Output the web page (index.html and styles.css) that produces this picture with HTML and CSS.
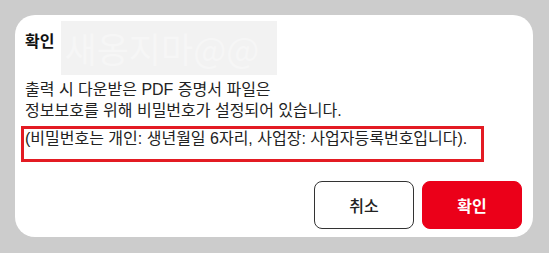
FILE: index.html
```html
<!DOCTYPE html>
<html lang="ko">
<head>
<meta charset="utf-8">
<title>확인</title>
<link rel="stylesheet" href="styles.css">
</head>
<body>
<div class="dialog">
  <div class="header">
    <h1 class="title">확인</h1>
    <div class="mark">새옹지마@@</div>
  </div>
  <div class="body">
    <p class="line">출력 시 다운받은 PDF 증명서 파일은</p>
    <p class="line">정보보호를 위해 비밀번호가 설정되어 있습니다.</p>
    <div class="highlight">
      <p class="line">(비밀번호는 개인: 생년월일 6자리, 사업장: 사업자등록번호입니다).</p>
    </div>
  </div>
  <div class="actions">
    <button class="btn btn-cancel">취소</button>
    <button class="btn btn-ok">확인</button>
  </div>
</div>
</body>
</html>
```
FILE: styles.css
```css
html, body {
  margin: 0;
  padding: 0;
  background: #cccccc;
}
body {
  font-family: "Noto Sans CJK KR", "Noto Sans", sans-serif;
  width: 549px;
  height: 253px;
  overflow: hidden;
}
.dialog {
  box-sizing: border-box;
  margin: 15px 0 0 15px;
  width: 518px;
  height: 222px;
  background: #ffffff;
  border-radius: 20px;
  padding: 6px 11px 8px 10px;
  display: flex;
  flex-direction: column;
}
.header {
  display: flex;
  align-items: flex-start;
  gap: 7px;
}
.title {
  margin: 9px 0 0 0;
  font-size: 16px;
  line-height: 20px;
  font-weight: 700;
  color: #111111;
}
.mark {
  width: 216px;
  height: 54px;
  background: #f2f2f2;
  color: #f6f6f6;
  font-size: 35px;
  line-height: 54px;
  padding-left: 3px;
  box-sizing: border-box;
  white-space: nowrap;
  overflow: hidden;
}
.body {
  margin-top: 4px;
  color: #222222;
  font-family: "Liberation Sans", "Noto Sans CJK KR", sans-serif;
}
.line {
  margin: 0;
  font-size: 16px;
  line-height: 21px;
  white-space: nowrap;
}
.highlight {
  margin: 5px 0 0 -4px;
  width: 463px;
  box-sizing: border-box;
  border: 3px solid #e31b23;
  padding: 0 0 10px 1px;
}
.highlight .line {
  line-height: 20px;
}
.actions {
  margin-top: auto;
  display: flex;
  justify-content: flex-end;
  gap: 8px;
}
.btn {
  width: 100px;
  height: 48px;
  border-radius: 8px;
  font-family: "Noto Sans CJK KR", "Noto Sans", sans-serif;
  font-size: 16px;
  font-weight: 500;
  cursor: pointer;
  padding: 0;
}
.btn-cancel {
  background: #ffffff;
  border: 1px solid #333333;
  color: #222222;
}
.btn-ok {
  background: #eb0019;
  border: 1px solid #eb0019;
  color: #ffffff;
  font-weight: 700;
}
```
